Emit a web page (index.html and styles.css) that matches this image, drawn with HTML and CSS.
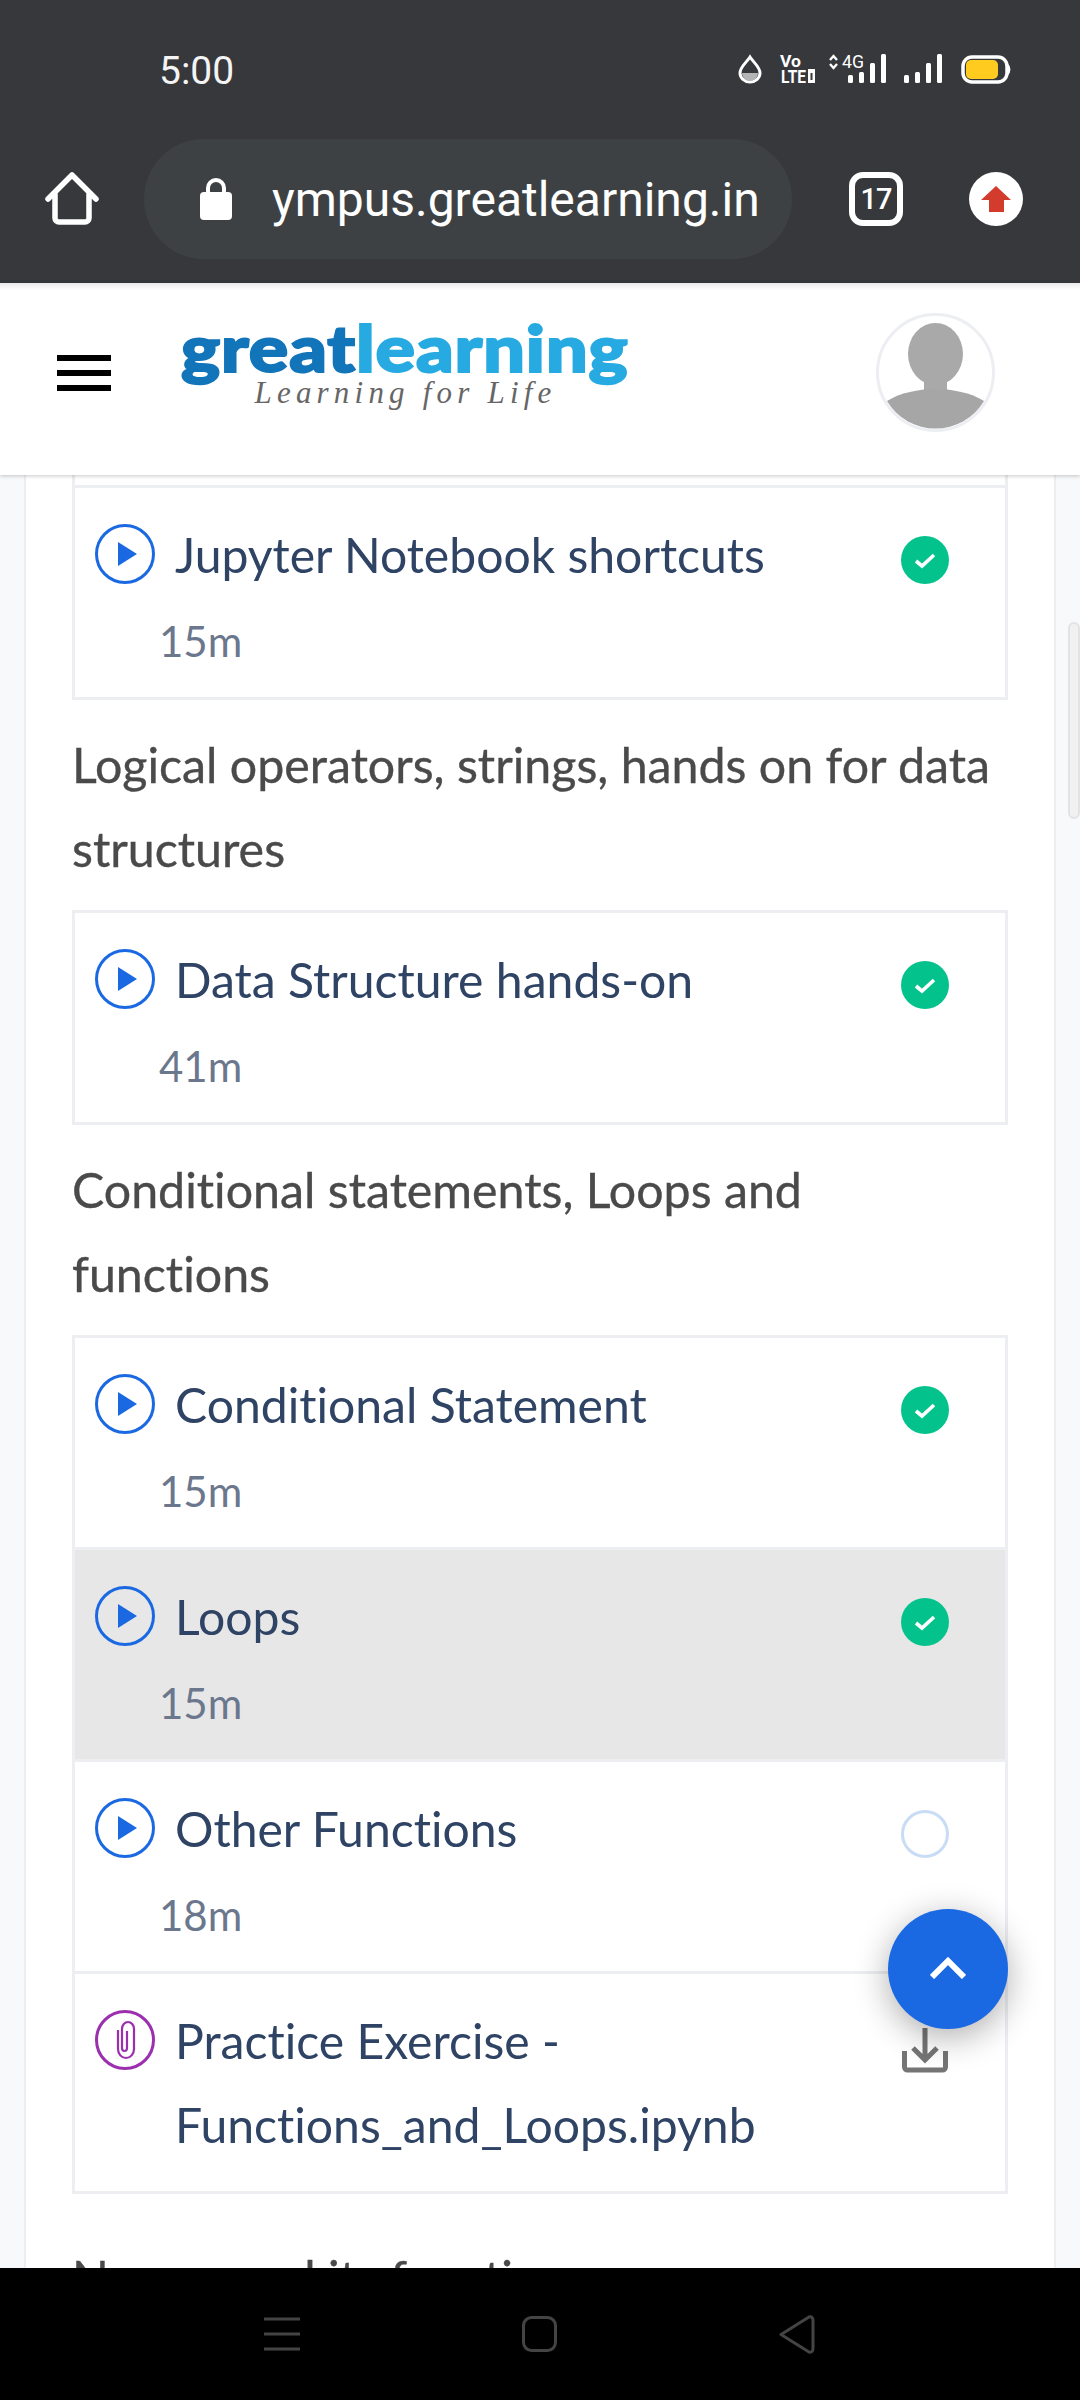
FILE: index.html
```html
<!DOCTYPE html>
<html lang="en">
<head>
<meta charset="utf-8">
<title>Great Learning</title>
<link rel="stylesheet" href="styles.css">
</head>
<body>
<div class="screen">
  <div class="chrome">
    <div class="status">
      <span class="time">5:00</span>
      <svg class="status-icons" width="273" height="42" viewBox="0 -6 273 42">
        <path d="M12 3 C8 9 2 13 2 19 a10 9 0 0 0 20 0 C22 13 16 9 12 3Z" fill="none" stroke="#fff" stroke-width="3"/>
        <path d="M4 19 H20 a8 8 0 0 1 -16 0Z" fill="#b4b4b6"/>
        <text class="st-vo" x="42" y="13" textLength="21" lengthAdjust="spacingAndGlyphs">Vo</text>
        <text class="st-lte" x="43" y="29" textLength="25" lengthAdjust="spacingAndGlyphs">LTE</text>
        <rect x="70" y="15" width="7" height="14" fill="#fff"/>
        <rect x="72.5" y="19" width="2" height="7" fill="#36383c"/>
        <path d="M92 6 L95.5 2 L99 6 M92 10 L95.5 14 L99 10" fill="none" stroke="#fff" stroke-width="2.4"/>
        <text class="st-4g" x="104" y="14" textLength="22" lengthAdjust="spacingAndGlyphs">4G</text>
        <rect x="110" y="21" width="5" height="8" rx="1.5" fill="#fff"/>
        <rect x="121" y="18" width="5" height="11" rx="1.5" fill="#fff"/>
        <rect x="132" y="9" width="5" height="20" rx="1.5" fill="#fff"/>
        <rect x="143" y="0" width="5" height="29" rx="1.5" fill="#fff"/>
        <rect x="166" y="21" width="5" height="8" rx="1.5" fill="#fff"/>
        <rect x="177" y="18" width="5" height="11" rx="1.5" fill="#fff"/>
        <rect x="188" y="9" width="5" height="20" rx="1.5" fill="#fff"/>
        <rect x="199" y="0" width="5" height="29" rx="1.5" fill="#fff"/>
        <rect x="225" y="3" width="44" height="25" rx="9" fill="none" stroke="#fff" stroke-width="3.5"/>
        <path d="M270 10 a4 6 0 0 1 0 11Z" fill="#fff"/>
        <rect x="228" y="6" width="32" height="19" rx="5" fill="#ffcb1f"/>
      </svg>
    </div>
    <div class="toolbar">
      <svg class="home" width="54" height="54" viewBox="0 0 54 54">
        <path d="M3 27 L27 3 L51 27 M10 22 V46 a4 4 0 0 0 4 4 H40 a4 4 0 0 0 4 -4 V22" fill="none" stroke="#fff" stroke-width="5.5" stroke-linecap="round" stroke-linejoin="round"/>
      </svg>
      <div class="url-pill">
        <svg class="lock" width="32" height="42" viewBox="0 0 32 42">
          <rect x="0" y="14" width="32" height="28" rx="4" fill="#fff"/>
          <path d="M8 16 V10 a8 8 0 0 1 16 0 V16" fill="none" stroke="#fff" stroke-width="4"/>
        </svg>
        <span class="url">ympus.greatlearning.in</span>
      </div>
      <div class="tabs">17</div>
      <div class="update">
        <svg width="30" height="26" viewBox="0 0 30 26"><path d="M15 0 L30 14 H23 V26 H8 V14 H0Z" fill="#d33c2c"/></svg>
      </div>
    </div>
  </div>

  <header class="site-head">
    <div class="burger"><i></i><i></i><i></i></div>
    <div class="logo">
      <div class="logo-word"><span class="logo-a">great</span><span class="logo-b">learning</span></div>
      <div class="logo-tag">Learning for Life</div>
    </div>
    <svg class="avatar" width="119" height="119" viewBox="0 0 119 119">
      <circle cx="59.5" cy="59.5" r="58" fill="#fff" stroke="#eceef2" stroke-width="3"/>
      <ellipse cx="59.5" cy="41" rx="27.5" ry="31" fill="#a9a9a9"/>
      <path d="M48 66 H71 V80 H48Z" fill="#a9a9a9"/>
      <path d="M11 88 C25 79 45 76 59.5 76 C74 76 94 79 108 88 A56.5 56.5 0 0 1 11 88Z" fill="#a6a6a6"/>
    </svg>
  </header>

  <main class="content">
    <div class="card">
      <div class="stub"></div>

      <ul class="list">
        <li class="row">
          <div class="row-head">
            <svg class="kind" width="60" height="60" viewBox="0 0 60 60"><circle cx="30" cy="30" r="28.5" fill="none" stroke="#1a69e3" stroke-width="3"/><path d="M23 18 L42 30 L23 42Z" fill="#1a69e3"/></svg>
            <span class="title">Jupyter Notebook shortcuts</span>
            <svg class="state" width="48" height="48" viewBox="0 0 48 48"><circle cx="24" cy="24" r="24" fill="#04c28c"/><path d="M15 25 L21 30 L33 19" fill="none" stroke="#fff" stroke-width="3.6"/></svg>
          </div>
          <div class="dur">15m</div>
        </li>
      </ul>

      <h3 class="section">Logical operators, strings, hands on for data structures</h3>
      <ul class="list">
        <li class="row">
          <div class="row-head">
            <svg class="kind" width="60" height="60" viewBox="0 0 60 60"><circle cx="30" cy="30" r="28.5" fill="none" stroke="#1a69e3" stroke-width="3"/><path d="M23 18 L42 30 L23 42Z" fill="#1a69e3"/></svg>
            <span class="title">Data Structure hands-on</span>
            <svg class="state" width="48" height="48" viewBox="0 0 48 48"><circle cx="24" cy="24" r="24" fill="#04c28c"/><path d="M15 25 L21 30 L33 19" fill="none" stroke="#fff" stroke-width="3.6"/></svg>
          </div>
          <div class="dur">41m</div>
        </li>
      </ul>

      <h3 class="section">Conditional statements, Loops and functions</h3>
      <ul class="list">
        <li class="row">
          <div class="row-head">
            <svg class="kind" width="60" height="60" viewBox="0 0 60 60"><circle cx="30" cy="30" r="28.5" fill="none" stroke="#1a69e3" stroke-width="3"/><path d="M23 18 L42 30 L23 42Z" fill="#1a69e3"/></svg>
            <span class="title">Conditional Statement</span>
            <svg class="state" width="48" height="48" viewBox="0 0 48 48"><circle cx="24" cy="24" r="24" fill="#04c28c"/><path d="M15 25 L21 30 L33 19" fill="none" stroke="#fff" stroke-width="3.6"/></svg>
          </div>
          <div class="dur">15m</div>
        </li>
        <li class="row row-active">
          <div class="row-head">
            <svg class="kind" width="60" height="60" viewBox="0 0 60 60"><circle cx="30" cy="30" r="28.5" fill="none" stroke="#1a69e3" stroke-width="3"/><path d="M23 18 L42 30 L23 42Z" fill="#1a69e3"/></svg>
            <span class="title">Loops</span>
            <svg class="state" width="48" height="48" viewBox="0 0 48 48"><circle cx="24" cy="24" r="24" fill="#04c28c"/><path d="M15 25 L21 30 L33 19" fill="none" stroke="#fff" stroke-width="3.6"/></svg>
          </div>
          <div class="dur">15m</div>
        </li>
        <li class="row">
          <div class="row-head">
            <svg class="kind" width="60" height="60" viewBox="0 0 60 60"><circle cx="30" cy="30" r="28.5" fill="none" stroke="#1a69e3" stroke-width="3"/><path d="M23 18 L42 30 L23 42Z" fill="#1a69e3"/></svg>
            <span class="title">Other Functions</span>
            <svg class="state" width="48" height="48" viewBox="0 0 48 48"><circle cx="24" cy="24" r="22.5" fill="none" stroke="#c8dcf5" stroke-width="3"/></svg>
          </div>
          <div class="dur">18m</div>
        </li>
        <li class="row row-file">
          <div class="row-head">
            <svg class="kind" width="60" height="60" viewBox="0 0 60 60"><circle cx="30" cy="30" r="28.5" fill="none" stroke="#9b2fae" stroke-width="3"/><path d="M23 20 V39 a8 9 0 0 0 16 0 V19 a6 7 0 0 0 -12 0 V38 a2.5 3 0 0 0 5 0 V21" fill="none" stroke="#9b2fae" stroke-width="2.2"/></svg>
            <span class="title">Practice Exercise - Functions_and_Loops.ipynb</span>
            <svg class="state state-dl" width="46" height="45" viewBox="0 0 46 45"><path d="M23 0 V31 M11 20 L23 32 L35 20 M2.5 23 V39 a3 3 0 0 0 3 3 H40.5 a3 3 0 0 0 3 -3 V23" fill="none" stroke="#757575" stroke-width="5"/></svg>
          </div>
        </li>
      </ul>

      <h3 class="section section-next">Numpy and its functions</h3>
    </div>
    <div class="scrollbar"></div>
  </main>

  <nav class="sysnav">
    <svg width="36" height="35" viewBox="0 0 36 35"><path d="M0 2 H36 M0 17 H36 M0 32 H36" stroke="#444" stroke-width="3"/></svg>
    <svg width="35" height="36" viewBox="0 0 35 36"><rect x="1.5" y="1.5" width="32" height="33" rx="8" fill="none" stroke="#444" stroke-width="3"/></svg>
    <svg width="36" height="39" viewBox="0 0 36 39"><path d="M2 19.5 L30 2 Q34 1 34 6 V33 Q34 38 30 37Z" fill="none" stroke="#444" stroke-width="3" stroke-linejoin="round"/></svg>
  </nav>

  <button class="fab" type="button" aria-label="Back to top">
    <svg width="36" height="22" viewBox="0 0 36 22"><path d="M2 20 L18 4 L34 20" fill="none" stroke="#fff" stroke-width="6"/></svg>
  </button>
</div>
</body>
</html>
```

FILE: styles.css
```css
* { box-sizing: border-box; }
html, body { margin: 0; padding: 0; }
body {
  font-family: "Lato", "Liberation Sans", sans-serif;
  font-variant-ligatures: none;
  background: #f8f9fb;
}

.screen {
  position: relative;
  width: 1080px;
  height: 2400px;
  overflow: hidden;
  display: flex;
  flex-direction: column;
}

/* browser chrome */
.chrome {
  flex: none;
  height: 283px;
  background: #36383c;
  font-family: "Roboto", "Liberation Sans", sans-serif;
  color: #fff;
}
.status {
  height: 139px;
  display: flex;
  align-items: flex-start;
  justify-content: space-between;
  padding: 48px 69px 0 159px;
}
.time { font-size: 39px; line-height: 46px; color: #f4f4f4; }
.status-icons { display: block; }
.st-vo { font: 700 17px "Roboto", sans-serif; fill: #fff; }
.st-lte { font: 700 19px "Roboto", sans-serif; fill: #fff; }
.st-4g { font: 400 18px "Roboto", sans-serif; fill: #fff; }

.toolbar {
  height: 120px;
  display: flex;
  align-items: center;
}
.home { margin-left: 45px; flex: none; }
.url-pill {
  margin-left: 45px;
  width: 648px;
  height: 120px;
  border-radius: 60px;
  background: #3e4144;
  display: flex;
  align-items: center;
  padding-left: 56px;
  flex: none;
}
.lock { flex: none; }
.url { margin-left: 40px; font-size: 48px; white-space: nowrap; color: #fff; }
.tabs {
  margin-left: 57px;
  width: 54px;
  height: 54px;
  border: 6px solid #fff;
  border-radius: 14px;
  display: flex;
  align-items: center;
  justify-content: center;
  font-size: 29px;
  font-weight: 500;
  letter-spacing: -1px;
  flex: none;
}
.update {
  margin-left: 66px;
  width: 54px;
  height: 54px;
  border-radius: 50%;
  background: #fff;
  display: flex;
  align-items: center;
  justify-content: center;
  flex: none;
}
.update svg { display: block; }

/* site header */
.site-head {
  position: relative;
  z-index: 2;
  flex: none;
  height: 192px;
  background: #fff;
  box-shadow: 0 1px 4px rgba(0,0,0,.22), inset 0 7px 6px -5px rgba(0,0,0,.12);
  display: flex;
  align-items: center;
  padding: 0 0 13px 57px;
}
.burger { width: 54px; display: flex; flex-direction: column; gap: 9px; flex: none; }
.burger i { display: block; height: 6px; background: #000; }
.logo { margin-left: 70px; width: 449px; flex: none; text-align: center; padding-bottom: 18px; }
.logo-word {
  width: 392px;
  font-size: 64px;
  line-height: 56px;
  font-weight: 900;
  text-align: left;
  white-space: nowrap;
  letter-spacing: 0.8px;
  -webkit-text-stroke: 2px currentColor;
  transform: translateY(3px) scaleX(1.15);
  transform-origin: left center;
}
.logo-a { color: #1275ba; }
.logo-b { color: #27aae1; }
.logo-tag {
  margin-top: 3px;
  font-family: "Liberation Serif", serif;
  font-style: italic;
  font-size: 31px;
  line-height: 34px;
  letter-spacing: 5.2px;
  color: #666;
}
.avatar { margin-left: 246px; flex: none; display: block; }

/* content */
.content { position: relative; flex: 1; min-height: 0; overflow: hidden; }
.card {
  height: 100%;
  margin: 0 24px;
  padding: 0 48px;
  background: #fff;
  border-left: 2px solid #eceef2;
  border-right: 2px solid #eceef2;
}
.stub { height: 10px; margin: 0 -2px 0 -2px; border-left: 3px solid #eceef2; border-right: 3px solid #eceef2; }
.list {
  list-style: none;
  margin: 0 -2px;
  padding: 0;
  border: 3px solid #eceef2;
}
.row { padding-top: 25px; height: 212px; border-bottom: 3px solid #eceef2; }
.row:last-child { height: 209px; border-bottom: 0; }
.row-active { background: #e7e7e8; }
.row.row-file { height: 217px; }
.row-head { display: flex; align-items: flex-start; padding: 0 56px 0 20px; }
.kind { flex: none; margin-top: 11px; display: block; }
.title {
  flex: 1;
  margin-left: 20px;
  font-size: 48.1px;
  line-height: 84px;
  color: #2f4365;
}
.state { flex: none; margin-top: 23px; display: block; }
.state-dl { margin-top: 29px; margin-right: 1px; }
.row-file .title { padding-right: 60px; }
.dur {
  padding-left: 84px;
  margin-top: 19px;
  font-size: 42px;
  line-height: 50px;
  color: #6b778c;
}
.section {
  margin: 22px -2px 20px;
  padding-right: 8px;
  font-size: 48.3px;
  line-height: 84px;
  font-weight: 400;
  color: #4a4a4a;
  -webkit-text-stroke: 0.35px #4a4a4a;
}
.section-next { margin-top: 41px; }

.scrollbar {
  position: absolute;
  left: 1068px;
  top: 147px;
  width: 12px;
  height: 197px;
  border: 2px solid #e3e3e5;
  border-radius: 6px;
  background: #f1f1f2;
}

/* system nav */
.sysnav {
  flex: none;
  height: 132px;
  background: #000;
  display: flex;
  align-items: center;
  padding: 0 0 0 264px;
  gap: 222px;
}
.sysnav svg { display: block; flex: none; }

.fab {
  position: absolute;
  left: 888px;
  top: 1909px;
  width: 120px;
  height: 120px;
  padding: 0;
  border: 0;
  border-radius: 50%;
  background: #1a69e3;
  box-shadow: 0 8px 34px rgba(0,0,0,.32);
  display: flex;
  align-items: center;
  justify-content: center;
}
.fab svg { display: block; margin-top: -3px; }
```
